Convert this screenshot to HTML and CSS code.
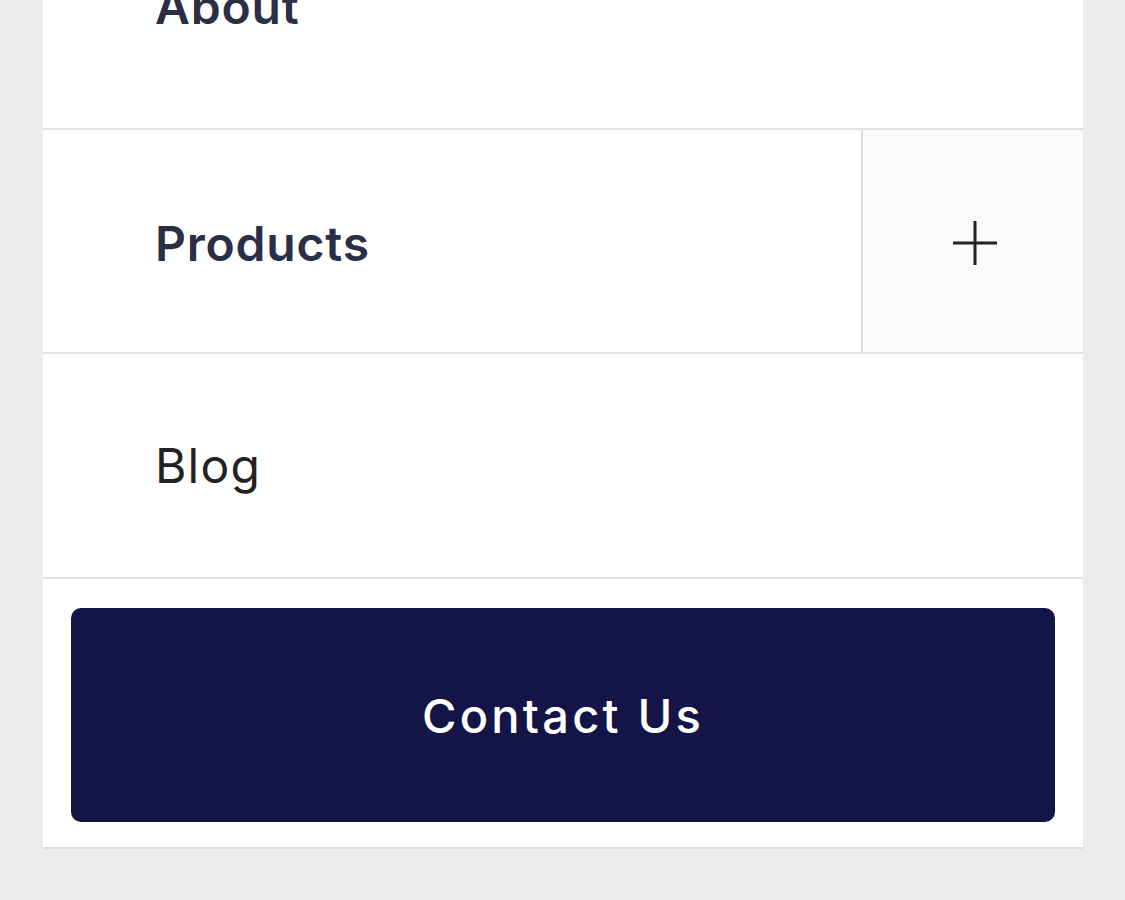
FILE: index.html
```html
<!DOCTYPE html>
<html lang="en">
<head>
  <meta charset="UTF-8">
  <meta name="viewport" content="width=device-width, initial-scale=1.0">
  <title>Menu</title>
  <link rel="stylesheet" href="styles.css">
</head>
<body>
  <nav class="menu">
    <a class="menu-row first" href="#">
      <span class="menu-label strong">About</span>
    </a>
    <div class="menu-row has-toggle">
      <a class="menu-label strong" href="#">Products</a>
      <button class="toggle" aria-label="Open products">
        <svg width="46" height="46" viewBox="0 0 46 46">
          <path d="M23 1v44M1 23h44" stroke="#222" stroke-width="3" fill="none"/>
        </svg>
      </button>
    </div>
    <a class="menu-row last" href="#">
      <span class="menu-label">Blog</span>
    </a>
    <div class="menu-cta">
      <a class="button" href="#">Contact Us</a>
    </div>
  </nav>
</body>
</html>
```

FILE: styles.css
```css
/* mobile menu */
* {
  margin: 0;
  padding: 0;
  box-sizing: border-box;
  text-decoration: none;
}

body {
  background-color: #ebecee;
  font-family: "Inter", "Noto Sans", sans-serif;
  padding: 0 42px 0 43px;
  height: 900px;
  overflow: hidden;
}

.menu {
  margin-top: -94px;
  background-color: #fff;
  box-shadow: 0 2px 0 #dcdcdc;
}

.menu-row {
  display: flex;
  align-items: center;
  height: 224px;
  border-bottom: 2px solid #e2e2e2;
  padding-left: 112px;
}

.menu-row.first {
  padding-bottom: 22px;
}

.menu-row.last {
  height: 225px;
}

.menu-label {
  font-size: 48px;
  font-weight: 400;
  color: #222;
  letter-spacing: 1.2px;
}

.menu-label.strong {
  font-weight: 600;
  color: #2b2f45;
  letter-spacing: 0.8px;
}

.has-toggle {
  padding-left: 0;
}

.has-toggle .menu-label {
  flex: 1;
  padding-left: 112px;
  padding-top: 4px;
}

.toggle {
  width: 222px;
  height: 100%;
  border: none;
  border-left: 2px solid #dcdcdc;
  background-color: #fbfbfb;
  display: flex;
  align-items: center;
  justify-content: center;
  padding: 4px 0 0 4px;
}

.menu-cta {
  padding: 29px 28px 25px;
}

.button {
  display: flex;
  align-items: center;
  justify-content: center;
  height: 214px;
  background-color: #131546;
  border-radius: 10px;
  color: #fff;
  font-size: 47px;
  font-weight: 500;
  letter-spacing: 3.2px;
}
```
